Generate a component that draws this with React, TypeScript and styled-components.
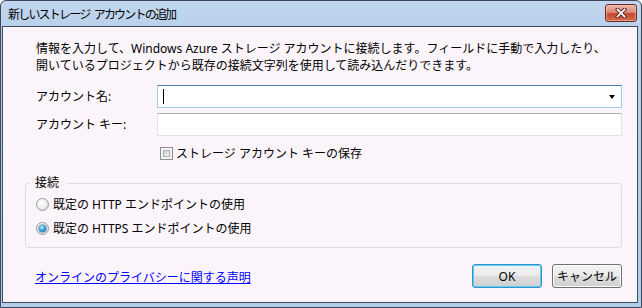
import React from "react";
import styled, { createGlobalStyle } from "styled-components";

const GlobalStyle = createGlobalStyle`
  html, body { margin: 0; padding: 0; background: #ffffff; }
  body {
    font-family: "Noto Sans", "Noto Sans CJK JP", sans-serif;
    font-size: 12px;
    color: #000;
  }
  * { box-sizing: border-box; }
`;

const FONT = `"Noto Sans", "Noto Sans CJK JP", sans-serif`;

const Window = styled.div`
  width: 642px;
  height: 308px;
  border: 1px solid #3c4858;
  border-radius: 6px 6px 0 0;
  background: linear-gradient(#c2d7ef 0px, #bad1eb 25px, #b2cdea 100%);
  display: flex;
  flex-direction: column;
  overflow: hidden;
`;

const TitleBar = styled.div`
  height: 25px;
  flex: none;
  display: flex;
  align-items: flex-start;
  justify-content: space-between;
  padding: 0 4px 0 7px;
`;

const Title = styled.span`
  font-size: 12px;
  line-height: 16px;
  margin-top: 6px;
  letter-spacing: -1.8px;
  word-spacing: 3px;
  color: #000;
  white-space: nowrap;
`;

const CloseButton = styled.button`
  width: 32px;
  height: 18px;
  margin-top: 3px;
  padding: 0;
  border: 1px solid #6a2a22;
  border-radius: 3px;
  background: linear-gradient(#ecb3a6 0%, #de8a76 45%, #c8482f 55%, #d16a50 100%);
  box-shadow: inset 0 0 0 1px rgba(255, 220, 210, 0.45);
  display: flex;
  align-items: center;
  justify-content: center;
`;

const Client = styled.div`
  flex: 1;
  margin: 0 3px 4px 1px;
  border: 1px solid #3d4d61;
  background: #fbf5fb;
  padding: 13px 15px 0 22px;
  display: flex;
  flex-direction: column;
`;

const Description = styled.p`
  margin: 0 0 0 11px;
  line-height: 17px;
  font-size: 12px;
  white-space: nowrap;
`;

const FormGrid = styled.div`
  margin: 11px 0 0 11px;
  display: grid;
  grid-template-columns: 121px 1fr;
  row-gap: 5px;
  align-items: center;
`;

const Label = styled.label`
  font-size: 12px;
  line-height: 16px;
  white-space: nowrap;
`;

const Field = styled.div<{ $focused?: boolean }>`
  height: 23px;
  background: #ffffff;
  border: 1px solid ${(p) => (p.$focused ? "#a3cbe9" : "#e1e3ea")};
  border-top-color: ${(p) => (p.$focused ? "#4f7eab" : "#abadb3")};
  display: flex;
  align-items: center;
  justify-content: space-between;
  padding: 0 6px 0 5px;
`;

const Caret = styled.span`
  width: 1px;
  height: 15px;
  background: #000;
`;

const DropArrow = styled.span`
  width: 0;
  height: 0;
  border-left: 3.5px solid transparent;
  border-right: 3.5px solid transparent;
  border-top: 4px solid #000;
`;

const CheckRow = styled.label`
  grid-column: 2;
  margin-top: 5px;
  padding-left: 3px;
  height: 14px;
  display: flex;
  align-items: center;
  gap: 3px;
  font-size: 12px;
  white-space: nowrap;
`;

const CheckBox = styled.span`
  width: 13px;
  height: 13px;
  flex: none;
  border: 1px solid #8e8f8f;
  background: #f4f4f4;
  padding: 2px;
  display: flex;
  &::after {
    content: "";
    flex: 1;
    border: 1px solid #aeb3b9;
    background: linear-gradient(135deg, #c9cdd3, #f5f5f6);
  }
`;

const GroupBox = styled.fieldset`
  margin: 15px 0 0 0;
  padding: 3px 10px 9px 10px;
  border: 1px solid #d5dfe5;
  border-radius: 3px;
  min-inline-size: 0;
  display: flex;
  flex-direction: column;
  gap: 4px;
`;

const Legend = styled.legend`
  padding: 0 8px 0 5px;
  margin-left: -6px;
  line-height: 16px;
  font-size: 12px;
`;

const RadioRow = styled.label`
  height: 20px;
  display: flex;
  align-items: center;
  gap: 4px;
  font-size: 12px;
  white-space: nowrap;
`;

const RadioCircle = styled.span<{ $checked?: boolean }>`
  width: 13px;
  height: 13px;
  flex: none;
  border-radius: 50%;
  border: 1px solid #979899;
  background: radial-gradient(circle at 40% 35%, #ffffff 0%, #f1f1f1 45%, #cfd1d4 100%);
  display: flex;
  align-items: center;
  justify-content: center;
  &::after {
    content: "";
    display: ${(p) => (p.$checked ? "block" : "none")};
    width: 7px;
    height: 7px;
    border-radius: 50%;
    background: radial-gradient(circle at 40% 35%, #c4ecff 0%, #3aa8e2 45%, #0a5a92 100%);
    box-shadow: 0 0 0 0.5px #1f5f8c;
  }
`;

const BottomRow = styled.div`
  margin-top: 16px;
  padding-left: 10px;
  display: flex;
  align-items: center;
  gap: 10px;
`;

const Link = styled.a`
  flex: 1;
  margin-top: 4px;
  color: #0000ff;
  text-decoration: underline;
  font-size: 12px;
  line-height: 16px;
  white-space: nowrap;
`;

const Button = styled.button<{ $default?: boolean }>`
  width: 70px;
  height: 24px;
  padding: 0;
  border-radius: 3px;
  border: 1px solid ${(p) => (p.$default ? "#3a8fc6" : "#707070")};
  background: linear-gradient(#f2f2f2 0%, #ebebeb 50%, #dddddd 51%, #cfcfcf 100%);
  box-shadow: inset 0 0 0 1px ${(p) => (p.$default ? "#57d2f5" : "#fbfbfb")};
  font-family: ${FONT};
  font-size: 12px;
  color: #000;
  white-space: nowrap;
`;

export default function App() {
  return (
    <>
      <GlobalStyle />
      <Window>
        <TitleBar>
          <Title>新しいストレージ アカウントの追加</Title>
          <CloseButton aria-label="閉じる">
            <svg width="12" height="10" viewBox="0 0 12 10">
              <path d="M2.5 1.5 L9.5 8.5 M9.5 1.5 L2.5 8.5" stroke="#4a1b14" strokeWidth="3.6" strokeLinecap="square" fill="none" />
              <path d="M2.5 1.5 L9.5 8.5 M9.5 1.5 L2.5 8.5" stroke="#ffffff" strokeWidth="1.8" strokeLinecap="square" fill="none" />
            </svg>
          </CloseButton>
        </TitleBar>
        <Client>
          <Description>
            情報を入力して、Windows Azure ストレージ アカウントに接続します。フィールドに手動で入力したり、
            <br />
            開いているプロジェクトから既存の接続文字列を使用して読み込んだりできます。
          </Description>
          <FormGrid>
            <Label>アカウント名:</Label>
            <Field $focused>
              <Caret />
              <DropArrow />
            </Field>
            <Label>アカウント キー:</Label>
            <Field />
            <CheckRow>
              <CheckBox />
              ストレージ アカウント キーの保存
            </CheckRow>
          </FormGrid>
          <GroupBox>
            <Legend>接続</Legend>
            <RadioRow>
              <RadioCircle />
              既定の HTTP エンドポイントの使用
            </RadioRow>
            <RadioRow>
              <RadioCircle $checked />
              既定の HTTPS エンドポイントの使用
            </RadioRow>
          </GroupBox>
          <BottomRow>
            <Link href="#">オンラインのプライバシーに関する声明</Link>
            <Button $default>OK</Button>
            <Button>キャンセル</Button>
          </BottomRow>
        </Client>
      </Window>
    </>
  );
}
